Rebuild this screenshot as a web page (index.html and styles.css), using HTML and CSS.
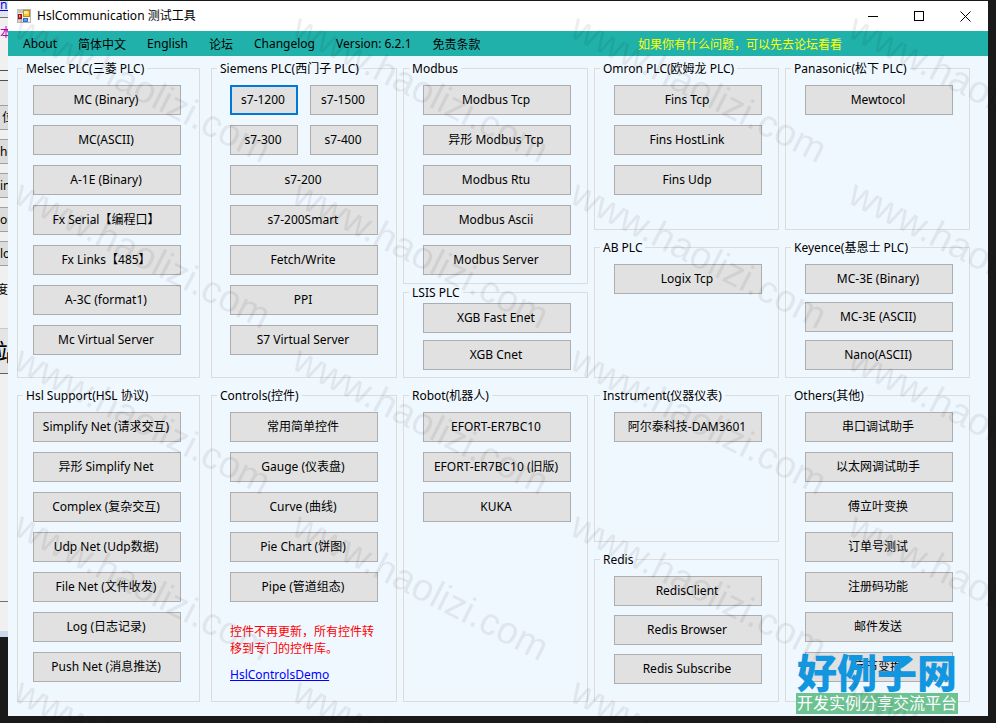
FILE: index.html
```
<!DOCTYPE html>
<html lang="zh-CN">
<head>
    <meta charset="UTF-8">
    <meta name="viewport" content="width=device-width, initial-scale=1.0">
    <title>HslCommunication 测试工具</title>
    <link rel="stylesheet" href="styles.css">
</head>
<body>
    <div class="desktop">
        <!-- edge of the window behind -->
        <div class="behind">
            <div class="behind-link"><a href="#">nl</a></div>
            <div class="behind-note">本</div>
            <div class="behind-bar"></div>
            <div class="behind-gap"></div>
            <div class="behind-btn cjk">位</div>
            <div class="behind-btn">ho</div>
            <div class="behind-btn">in</div>
            <div class="behind-btn">or</div>
            <div class="behind-btn">lo</div>
            <div class="behind-label">度</div>
            <div class="behind-big">站</div>
            <div class="behind-page"></div>
            <div class="behind-status"></div>
            <div class="behind-task"></div>
        </div>

        <div class="window">
            <header class="titlebar">
                <svg class="app-icon" width="14" height="14" viewBox="0 0 14 14">
                    <rect x="0.5" y="0.5" width="13" height="13" fill="#eef0f4" stroke="#b4b4b8"/>
                    <rect x="0" y="0" width="6" height="4" fill="#c4c4c8"/>
                    <rect x="1.5" y="5.5" width="3" height="4" fill="#d83030" stroke="#a01010"/>
                    <rect x="2" y="6" width="1" height="2" fill="#f0a0a0"/>
                    <rect x="6.5" y="1.5" width="6" height="6" fill="#f8c838" stroke="#c08a10"/>
                    <rect x="7" y="2" width="4" height="3" fill="#ffe890"/>
                    <rect x="6.5" y="9.5" width="4" height="3" fill="#5a9ae8" stroke="#3a6cc0"/>
                    <rect x="0.5" y="10.5" width="4" height="3" fill="#d4d4d8" stroke="#b4b4b8"/>
                </svg>
                <h1>HslCommunication 测试工具</h1>
                <div class="window-buttons">
                    <button type="button" aria-label="Minimize">
                        <svg width="11" height="11" viewBox="0 0 11 11"><path d="M0 5.5H10" stroke="#000"/></svg>
                    </button>
                    <button type="button" aria-label="Maximize">
                        <svg width="11" height="11" viewBox="0 0 11 11"><rect x="0.5" y="0.5" width="9" height="9" fill="none" stroke="#000"/></svg>
                    </button>
                    <button type="button" aria-label="Close">
                        <svg width="11" height="11" viewBox="0 0 11 11"><path d="M0.5 0.5L10.5 10.5M10.5 0.5L0.5 10.5" stroke="#000"/></svg>
                    </button>
                </div>
            </header>

            <nav class="menu">
                <a href="#">About</a>
                <a href="#">简体中文</a>
                <a href="#">English</a>
                <a href="#">论坛</a>
                <a href="#">Changelog</a>
                <a href="#">Version: 6.2.1</a>
                <a href="#">免责条款</a>
                <a href="#" class="menu-tip">如果你有什么问题，可以先去论坛看看</a>
            </nav>

            <main class="groups">
                <fieldset class="group first">
                    <legend>Melsec PLC(三菱 PLC)</legend>
                    <div class="buttons">
                        <button type="button">MC (Binary)</button>
                        <button type="button">MC(ASCII)</button>
                        <button type="button">A-1E (Binary)</button>
                        <button type="button">Fx Serial【编程口】</button>
                        <button type="button">Fx Links【485】</button>
                        <button type="button">A-3C (format1)</button>
                        <button type="button">Mc Virtual Server</button>
                    </div>
                </fieldset>

                <fieldset class="group second">
                    <legend>Siemens PLC(西门子 PLC)</legend>
                    <div class="buttons">
                        <div class="pair">
                            <button type="button" class="focused">s7-1200</button>
                            <button type="button">s7-1500</button>
                        </div>
                        <div class="pair">
                            <button type="button">s7-300</button>
                            <button type="button">s7-400</button>
                        </div>
                        <button type="button">s7-200</button>
                        <button type="button">s7-200Smart</button>
                        <button type="button">Fetch/Write</button>
                        <button type="button">PPI</button>
                        <button type="button">S7 Virtual Server</button>
                    </div>
                </fieldset>

                <div class="stack">
                    <fieldset class="group modbus">
                        <legend>Modbus</legend>
                        <div class="buttons">
                            <button type="button">Modbus Tcp</button>
                            <button type="button">异形 Modbus Tcp</button>
                            <button type="button">Modbus Rtu</button>
                            <button type="button">Modbus Ascii</button>
                            <button type="button">Modbus Server</button>
                        </div>
                    </fieldset>
                    <fieldset class="group lsis">
                        <legend>LSIS PLC</legend>
                        <div class="buttons">
                            <button type="button">XGB Fast Enet</button>
                            <button type="button">XGB Cnet</button>
                        </div>
                    </fieldset>
                </div>

                <div class="stack spaced">
                    <fieldset class="group upper">
                        <legend>Omron PLC(欧姆龙 PLC)</legend>
                        <div class="buttons">
                            <button type="button">Fins Tcp</button>
                            <button type="button">Fins HostLink</button>
                            <button type="button">Fins Udp</button>
                        </div>
                    </fieldset>
                    <fieldset class="group grow">
                        <legend>AB PLC</legend>
                        <div class="buttons">
                            <button type="button">Logix Tcp</button>
                        </div>
                    </fieldset>
                </div>

                <div class="stack spaced">
                    <fieldset class="group upper">
                        <legend>Panasonic(松下 PLC)</legend>
                        <div class="buttons">
                            <button type="button">Mewtocol</button>
                        </div>
                    </fieldset>
                    <fieldset class="group grow keyence">
                        <legend>Keyence(基恩士 PLC)</legend>
                        <div class="buttons">
                            <button type="button">MC-3E (Binary)</button>
                            <button type="button">MC-3E (ASCII)</button>
                            <button type="button">Nano(ASCII)</button>
                        </div>
                    </fieldset>
                </div>

                <fieldset class="group first">
                    <legend>Hsl Support(HSL 协议)</legend>
                    <div class="buttons">
                        <button type="button">Simplify Net (请求交互)</button>
                        <button type="button">异形 Simplify Net</button>
                        <button type="button">Complex (复杂交互)</button>
                        <button type="button">Udp Net (Udp数据)</button>
                        <button type="button">File Net (文件收发)</button>
                        <button type="button">Log (日志记录)</button>
                        <button type="button">Push Net (消息推送)</button>
                    </div>
                </fieldset>

                <fieldset class="group second">
                    <legend>Controls(控件)</legend>
                    <div class="buttons">
                        <button type="button">常用简单控件</button>
                        <button type="button">Gauge (仪表盘)</button>
                        <button type="button">Curve (曲线)</button>
                        <button type="button">Pie Chart (饼图)</button>
                        <button type="button">Pipe (管道组态)</button>
                    </div>
                    <p class="warning">控件不再更新，所有控件转移到专门的控件库。</p>
                    <a href="#" class="demo-link">HslControlsDemo</a>
                </fieldset>

                <fieldset class="group">
                    <legend>Robot(机器人)</legend>
                    <div class="buttons">
                        <button type="button">EFORT-ER7BC10</button>
                        <button type="button">EFORT-ER7BC10 (旧版)</button>
                        <button type="button">KUKA</button>
                    </div>
                </fieldset>

                <div class="stack spaced">
                    <fieldset class="group grow">
                        <legend>Instrument(仪器仪表)</legend>
                        <div class="buttons">
                            <button type="button">阿尔泰科技-DAM3601</button>
                        </div>
                    </fieldset>
                    <fieldset class="group redis">
                        <legend>Redis</legend>
                        <div class="buttons">
                            <button type="button">RedisClient</button>
                            <button type="button">Redis Browser</button>
                            <button type="button">Redis Subscribe</button>
                        </div>
                    </fieldset>
                </div>

                <fieldset class="group">
                    <legend>Others(其他)</legend>
                    <div class="buttons">
                        <button type="button">串口调试助手</button>
                        <button type="button">以太网调试助手</button>
                        <button type="button">傅立叶变换</button>
                        <button type="button">订单号测试</button>
                        <button type="button">注册码功能</button>
                        <button type="button">邮件发送</button>
                        <button type="button">字节变换</button>
                    </div>
                </fieldset>
            </main>
        </div>

        <div class="site-logo">
            <div class="site-name">好例子网</div>
            <div class="site-slogan">开发实例分享交流平台</div>
        </div>

        <svg class="watermark" width="100%" height="100%" aria-hidden="true">
            <defs>
                <pattern id="mark" x="8" y="8" width="278" height="166" patternUnits="userSpaceOnUse">
                    <text class="watermark-text" transform="translate(4 28) rotate(27)">www.haolizi.com</text>
                </pattern>
            </defs>
            <rect width="100%" height="100%" fill="url(#mark)"/>
        </svg>
    </div>
</body>
</html>
```
FILE: styles.css
```
* {
    box-sizing: border-box;
}

body {
    margin: 0;
    background-color: #1a1a1a;
    font-family: "Noto Sans", "Noto Sans CJK SC", sans-serif;
    font-size: 12px;
    color: #000;
}

button {
    font: inherit;
    color: inherit;
    padding: 0;
}

.desktop {
    position: relative;
    display: flex;
    min-height: 100vh;
    padding: 1px 8px 8px 0;
    overflow: hidden;
}

/* window behind */
.behind {
    display: flex;
    flex-direction: column;
    width: 8px;
    overflow: hidden;
    white-space: nowrap;
    background-color: #f0f0f0;
    line-height: 16px;
}

.behind-link {
    height: 17px;
    line-height: 8px;
    background-color: #e4e4e8;
    border-bottom: 1px solid #707070;
}

.behind-link a {
    color: #00f;
}

.behind-note {
    height: 53px;
    line-height: 30px;
    color: #b000b0;
    border-bottom: 1px solid #505050;
}

.behind-bar {
    height: 10px;
    border-bottom: 1px solid #505050;
}

.behind-gap {
    height: 24px;
    background-color: #e6e6e6;
}

.behind-btn {
    height: 25px;
    margin-bottom: 9px;
    line-height: 23px;
    background-color: #dcdcdc;
    border: solid #a0a0a0;
    border-width: 1px 0;
}

.behind-btn.cjk {
    padding-left: 2px;
}

.behind-label {
    height: 54px;
    line-height: 30px;
    text-indent: -4px;
    border-bottom: 1px solid #c8c8c8;
}

.behind-big {
    height: 45px;
    line-height: 45px;
    font-size: 24px;
    text-indent: -4px;
    background-color: #e4e4e4;
    border-bottom: 1px solid #606060;
}

.behind-page {
    height: 228px;
    border-bottom: 1px solid #707070;
}

.behind-status {
    height: 35px;
    border-bottom: 6px solid #ccd8ea;
}

.behind-task {
    flex: 1;
    background-color: #1a1a1a;
}

/* main window */
.window {
    flex: 1;
    background-color: #f0f8ff;
}

.titlebar {
    display: flex;
    align-items: center;
    height: 30px;
    padding-left: 9px;
    background-color: #fff;
}

.titlebar h1 {
    margin: 0 auto 0 6px;
    padding-bottom: 2px;
    font-size: 12px;
    font-weight: normal;
}

.window-buttons {
    display: flex;
}

.window-buttons button {
    display: flex;
    align-items: center;
    justify-content: center;
    width: 46px;
    height: 30px;
    border: none;
    background: none;
}

.menu {
    display: flex;
    align-items: center;
    gap: 21px;
    height: 25px;
    padding: 0 146px 0 15px;
    background-color: #20b2aa;
    white-space: nowrap;
}

.menu a {
    color: #000;
    text-decoration: none;
}

.menu .menu-tip {
    margin-left: auto;
    color: #ff0;
}

.groups {
    display: grid;
    grid-template-columns: 188fr 186fr 185fr 185fr 185fr;
    gap: 10px 6px;
    padding: 5px 18px 14px 9px;
}

.stack {
    display: flex;
    flex-direction: column;
    gap: 1px;
}

.stack.spaced {
    gap: 10px;
}

.group {
    min-width: 0;
    margin: 0;
    padding: 9px 16px 18px 19px;
    border: 1px solid #dcdcdc;
}

.group legend {
    margin-left: -14px;
    padding: 0 3px;
    line-height: 15px;
    white-space: nowrap;
}

.group.first {
    margin-right: 5px;
    padding-left: 15px;
    padding-right: 18px;
}

.group.second {
    padding-left: 18px;
    padding-right: 18px;
}

.group.first legend {
    margin-left: -10px;
}

.group.second legend {
    margin-left: -13px;
}

.group.modbus {
    padding-bottom: 8px;
}

.group.lsis {
    padding-top: 3px;
    padding-bottom: 7px;
}

.group.upper {
    min-height: 169px;
}

.group.grow {
    flex: 1;
    padding-bottom: 7px;
}

.group.redis {
    padding-bottom: 17px;
}

.buttons {
    display: flex;
    flex-direction: column;
    gap: 10px;
}

.lsis .buttons {
    gap: 7px;
}

.keyence .buttons {
    gap: 8px;
}

.redis .buttons {
    gap: 9px;
}

.buttons button {
    width: 100%;
    height: 30px;
    padding: 0 2px 2px 0;
    border: 1px solid #adadad;
    background-color: #e1e1e1;
    white-space: nowrap;
}

.buttons button.focused {
    border: 2px solid #0078d7;
}

.pair {
    display: grid;
    grid-template-columns: 1fr 1fr;
    gap: 12px;
}

.warning {
    margin: 21px 0 9px;
    line-height: 17px;
    color: #f00;
}

.demo-link {
    line-height: 17px;
    color: #00f;
}

/* overlays */
.site-logo {
    position: absolute;
    right: 38px;
    bottom: 10px;
    width: 162px;
    text-align: center;
    white-space: nowrap;
    pointer-events: none;
}

.site-name {
    height: 44px;
    line-height: 44px;
    font-family: "Noto Sans CJK SC", sans-serif;
    font-size: 40px;
    font-weight: 900;
    color: #1296e0;
}

.site-slogan {
    height: 21px;
    line-height: 20px;
    font-size: 16px;
    color: #fff;
    background-color: #6dc291;
}

.watermark {
    position: absolute;
    top: 0;
    left: 0;
    pointer-events: none;
}

.watermark-text {
    font-family: "Liberation Sans", Arial, sans-serif;
    font-size: 38px;
    fill: #000;
    fill-opacity: 0.07;
}
```
